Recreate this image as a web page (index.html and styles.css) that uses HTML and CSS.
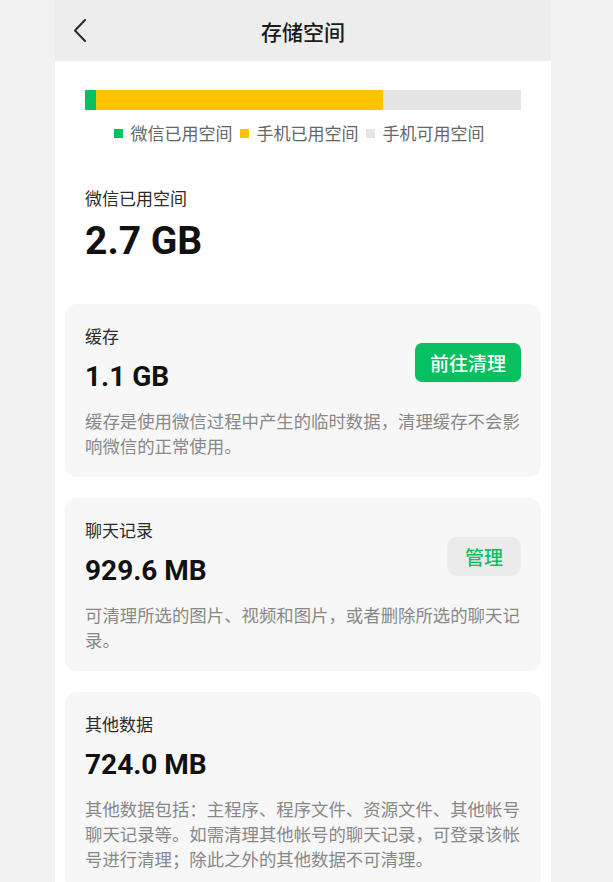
FILE: index.html
```html
<!DOCTYPE html>
<html lang="zh-CN">
<head>
	<meta charset="UTF-8">
	<title>存储空间</title>
	<link rel="stylesheet" href="styles.css">
</head>
<body>
	<div class="page">
		<div class="header">
			<a class="back">
				<svg width="14" height="24" viewBox="0 0 14 24"><polyline points="12,1 2,11.5 12,22" fill="none" stroke="#2a2a2a" stroke-width="2" stroke-linecap="round" stroke-linejoin="round"/></svg>
			</a>
			<h1 class="title">存储空间</h1>
			<span></span>
		</div>

		<div class="summary">
			<div class="bar">
				<span class="seg seg_wx" style="width: 11px"></span>
				<span class="seg seg_phone" style="width: 287px"></span>
				<span class="seg seg_free"></span>
			</div>
			<ul class="legend">
				<li><i class="dot dot_wx"></i>微信已用空间</li>
				<li><i class="dot dot_phone"></i>手机已用空间</li>
				<li><i class="dot dot_free"></i>手机可用空间</li>
			</ul>
			<p class="label">微信已用空间</p>
			<p class="total">2.7 GB</p>
		</div>

		<div class="cards">
			<div class="card">
				<div class="card_head">
					<div>
						<p class="label">缓存</p>
						<p class="size">1.1 GB</p>
					</div>
					<a class="btn btn_green">前往清理</a>
				</div>
				<p class="desc">缓存是使用微信过程中产生的临时数据，清理缓存不会影响微信的正常使用。</p>
			</div>

			<div class="card">
				<div class="card_head">
					<div>
						<p class="label">聊天记录</p>
						<p class="size">929.6 MB</p>
					</div>
					<a class="btn btn_gray">管理</a>
				</div>
				<p class="desc">可清理所选的图片、视频和图片，或者删除所选的聊天记录。</p>
			</div>

			<div class="card">
				<div class="card_head">
					<div>
						<p class="label">其他数据</p>
						<p class="size">724.0 MB</p>
					</div>
				</div>
				<p class="desc">其他数据包括：主程序、程序文件、资源文件、其他帐号聊天记录等。如需清理其他帐号的聊天记录，可登录该帐号进行清理；除此之外的其他数据不可清理。</p>
			</div>
		</div>
	</div>
</body>
</html>
```

FILE: styles.css
```css
*{
	margin: 0;
	padding: 0;
}
body{
	background-color: #f2f2f2;
	font-family: "Noto Sans CJK SC", sans-serif;
	color: #333;
}
.page{
	width: 496px;
	min-height: 882px;
	margin-left: 55px;
	background-color: #fff;
}
.header{
	display: grid;
	grid-template-columns: 1fr auto 1fr;
	align-items: center;
	height: 61px;
	padding: 0 18px;
	background-color: #ededed;
}
.back{
	display: flex;
	align-items: center;
	height: 24px;
	cursor: pointer;
}
.title{
	font-size: 21px;
	font-weight: 500;
	color: #1a1a1a;
	line-height: 28px;
}
.summary{
	padding: 29px 30px 0;
}
.bar{
	display: flex;
	height: 20px;
	background-color: #e5e5e5;
}
.seg{
	display: block;
	height: 20px;
}
.seg_wx{
	background-color: #07c160;
}
.seg_phone{
	background-color: #ffc300;
}
.seg_free{
	flex: 1;
}
.legend{
	list-style: none;
	display: flex;
	justify-content: center;
	gap: 7px;
	margin-top: 11px;
	padding-right: 8px;
	font-size: 17px;
	line-height: 24px;
	color: #666;
}
.legend li{
	display: flex;
	align-items: center;
}
.dot{
	display: block;
	width: 9px;
	height: 9px;
	margin-right: 8px;
}
.dot_wx{
	background-color: #07c160;
}
.dot_phone{
	background-color: #ffc300;
}
.dot_free{
	background-color: #e5e5e5;
}
.label{
	font-size: 17px;
	line-height: 24px;
	color: #2b2b2b;
}
.summary .label{
	margin-top: 41px;
}
.total{
	margin-top: 7px;
	font-family: Roboto, "Noto Sans CJK SC", sans-serif;
	font-weight: bold;
	font-size: 39px;
	line-height: 48px;
	color: #111;
}
.cards{
	display: flex;
	flex-direction: column;
	gap: 21px;
	padding: 39px 10px 0;
}
.card{
	padding: 20px 20px 19px;
	background-color: #f7f7f7;
	border-radius: 12px;
}
.card_head{
	display: flex;
	justify-content: space-between;
	align-items: center;
}
.size{
	margin-top: 12px;
	font-family: Roboto, "Noto Sans CJK SC", sans-serif;
	font-weight: bold;
	font-size: 28px;
	line-height: 34px;
	color: #111;
}
.btn{
	display: block;
	height: 39px;
	margin-top: 6px;
	font-size: 19px;
	font-weight: 500;
	line-height: 39px;
	border-radius: 7px;
	cursor: pointer;
}
.btn_green{
	padding: 0 15px;
	background-color: #07c160;
	color: #fff;
}
.btn_gray{
	padding: 0 18px;
	background-color: #ebebeb;
	color: #07c160;
	border-radius: 10px;
}
.desc{
	margin-top: 14px;
	font-size: 17.4px;
	line-height: 25px;
	color: #888;
}
```
